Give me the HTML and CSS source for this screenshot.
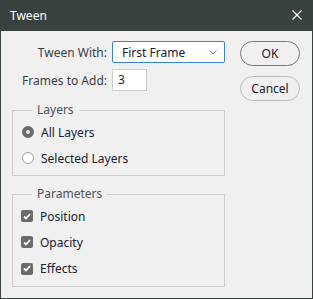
FILE: index.html
```html
<!DOCTYPE html>
<html>
<head>
    <link rel="stylesheet" href="styles.css">
</head>
<body>
    <div class="window">
        <div class="titlebar">
            <span class="title">Tween</span>
            <svg class="close" width="10" height="10" viewBox="0 0 10 10">
                <path d="M0.5 0.5 L9.5 9.5 M9.5 0.5 L0.5 9.5" stroke="#fff" stroke-width="1.2" fill="none"/>
            </svg>
        </div>

        <div class="content">
            <div class="left">
                <div class="field-row">
                    <label class="field-label">Tween With:</label>
                    <div class="select">
                        <span>First Frame</span>
                        <svg width="8" height="5" viewBox="0 0 8 5">
                            <path d="M0.5 0.5 L4 4 L7.5 0.5" stroke="#7a7a7a" stroke-width="1" fill="none"/>
                        </svg>
                    </div>
                </div>
                <div class="field-row">
                    <label class="field-label">Frames to Add:</label>
                    <div class="text-input">3</div>
                </div>

                <fieldset class="group group-layers">
                    <legend>Layers</legend>
                    <div class="option"><span class="radio checked"></span>All Layers</div>
                    <div class="option"><span class="radio"></span>Selected Layers</div>
                </fieldset>

                <fieldset class="group group-params">
                    <legend>Parameters</legend>
                    <div class="option"><span class="checkbox"><svg width="8" height="7" viewBox="0 0 8 7"><path d="M1 3.5 L3 5.5 L7 1" stroke="#fff" stroke-width="1.8" fill="none"/></svg></span>Position</div>
                    <div class="option"><span class="checkbox"><svg width="8" height="7" viewBox="0 0 8 7"><path d="M1 3.5 L3 5.5 L7 1" stroke="#fff" stroke-width="1.8" fill="none"/></svg></span>Opacity</div>
                    <div class="option"><span class="checkbox"><svg width="8" height="7" viewBox="0 0 8 7"><path d="M1 3.5 L3 5.5 L7 1" stroke="#fff" stroke-width="1.8" fill="none"/></svg></span>Effects</div>
                </fieldset>
            </div>

            <div class="buttons">
                <button class="btn btn-default">OK</button>
                <button class="btn">Cancel</button>
            </div>
        </div>
    </div>
</body>
</html>
```

FILE: styles.css
```css
body {
    margin: 0;
    font-family: "Noto Sans", sans-serif;
    font-size: 12px;
    color: #202030;
}

.window {
    width: 313px;
    height: 299px;
    box-sizing: border-box;
    border: 1px solid #3a4240;
    border-top: none;
    background-color: #f0f0f0;
}

.titlebar {
    height: 31px;
    margin: 0 -1px;
    background-color: #3a4240;
    display: flex;
    align-items: center;
    justify-content: space-between;
    padding: 0 11px 0 10px;
}

.title {
    color: #fff;
    font-size: 12px;
    margin-top: -1px;
}

.close {
    margin-bottom: 1px;
}

.content {
    display: flex;
    gap: 15px;
    padding: 10px 11px 0 11px;
}

.left {
    width: 213px;
}

.field-row {
    display: flex;
    align-items: center;
    gap: 5px;
    margin-bottom: 6px;
}

.field-label {
    width: 95px;
    text-align: right;
    color: #3c3c44;
}

.select {
    flex: 1;
    height: 22px;
    box-sizing: border-box;
    background-color: #fff;
    border: 1px solid #3c80e0;
    border-radius: 2px;
    display: flex;
    align-items: center;
    justify-content: space-between;
    padding: 0 7px 0 9px;
}

.text-input {
    width: 35px;
    height: 22px;
    box-sizing: border-box;
    background-color: #fff;
    border: 1px solid #cfcfcf;
    padding: 0 5px;
    line-height: 20px;
}

.group {
    margin: 0;
    padding: 1px 0 4px 9px;
    border: 1px solid #cdcdcd;
    min-width: 0;
}

.group-layers {
    margin-top: 11px;
}

.group-params {
    margin-top: 10px;
}

.group legend {
    margin-left: 10px;
    padding: 0 5px;
    line-height: 16px;
    color: #505058;
}

.option {
    height: 26px;
    display: flex;
    align-items: center;
    gap: 7px;
}

.group-params .option:last-child {
    height: 27px;
}

.radio {
    width: 12px;
    height: 12px;
    box-sizing: border-box;
    border-radius: 50%;
    border: 1px solid #a0a0a0;
    background-color: #fff;
}

.radio.checked {
    border: 4px solid #6b6b6b;
    background-color: #e8e8e8;
}

.checkbox {
    width: 12px;
    height: 12px;
    margin-left: -1px;
    border-radius: 2px;
    background-color: #6b6b6b;
    display: flex;
    align-items: center;
    justify-content: center;
}

.buttons {
    display: flex;
    flex-direction: column;
    gap: 10px;
}

.btn {
    width: 60px;
    height: 25px;
    padding: 0;
    font-family: "Noto Sans", sans-serif;
    font-size: 12px;
    color: #202030;
    background-color: #f0f0f0;
    border: 1px solid #bcbcbc;
    border-radius: 13px;
}

.btn-default {
    border-color: #7a7a7a;
}
```
